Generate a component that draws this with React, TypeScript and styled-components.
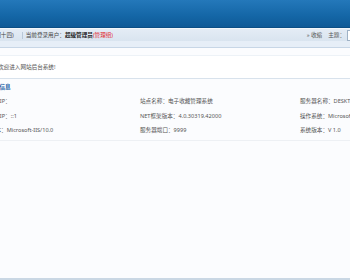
import React from "react";
import styled, { createGlobalStyle } from "styled-components";

const GlobalStyle = createGlobalStyle`
  html, body {
    margin: 0;
    padding: 0;
    background: #fbfcfe;
    overflow: hidden;
  }
  body {
    font-family: "Noto Sans", "Noto Sans CJK SC", sans-serif;
  }
`;

const rows = [
  [
    { label: "服务器IP：", value: "" },
    { label: "站点名称：", value: "电子收藏管理系统" },
    { label: "服务器名称：", value: "DESKTOP-8V1KQ2M" },
  ],
  [
    { label: "客户端IP：", value: "::1" },
    { label: "NET框架版本：", value: "4.0.30319.42000" },
    { label: "操作系统：", value: "Microsoft Windows NT 10.0" },
  ],
  [
    { label: "IIS版本：", value: "Microsoft-IIS/10.0" },
    { label: "服务器端口：", value: "9999" },
    { label: "系统版本：", value: "V 1.0" },
  ],
];

export default function App() {
  return (
    <>
      <GlobalStyle />
      <Page>
        <Header />
        <TopBar>
          <UserInfo>
            <span>(星期十四)</span>
            <Sep />
            <span>
              当前登录用户：<Strong>超级管理员</Strong>
              <Red>(管理组)</Red>
            </span>
          </UserInfo>
          <Tools>
            <span>» 收缩</span>
            <span>主题：</span>
            <ThemeBox />
          </Tools>
        </TopBar>
        <SubBand />
        <Main>
          <Welcome>欢迎进入网站后台系统!</Welcome>
          <Section>
            <Title>系统基本信息</Title>
            <InfoGrid>
              {rows.map((row, i) => (
                <InfoRow key={i}>
                  {row.map((cell) => (
                    <Cell key={cell.label}>
                      {cell.label}
                      {cell.value}
                    </Cell>
                  ))}
                </InfoRow>
              ))}
            </InfoGrid>
          </Section>
        </Main>
        <Footer />
      </Page>
    </>
  );
}

const Page = styled.div`
  width: 350px;
  height: 280px;
  display: flex;
  flex-direction: column;
  overflow: hidden;
`;

const Header = styled.div`
  height: 27px;
  flex-shrink: 0;
  background: linear-gradient(#2478ba, #1466a6 60%, #0f5a97);
  border-bottom: 1px solid #0b4e85;
`;

const TopBar = styled.div`
  height: 12px;
  flex-shrink: 0;
  display: flex;
  align-items: center;
  justify-content: space-between;
  background: linear-gradient(#e4ecf5, #d9e4ef);
  border-top: 1px solid #f2f6fa;
  font-size: 5.6px;
  color: #444;
`;

const UserInfo = styled.div`
  display: flex;
  align-items: center;
  margin-left: -12px;
`;

const Sep = styled.span`
  width: 1px;
  height: 7px;
  margin: 0 3px 0 8px;
  background: #b9c8d8;
`;

const Strong = styled.b`
  color: #222;
`;

const Red = styled.span`
  color: #e0262c;
`;

const Tools = styled.div`
  display: flex;
  align-items: center;
  gap: 6px;
  color: #555;
  margin-right: -9px;
`;

const ThemeBox = styled.span`
  width: 10px;
  height: 9px;
  margin-left: -4px;
  background: #fff;
  border: 1px solid #9fb2c6;
`;

const SubBand = styled.div`
  height: 6px;
  flex-shrink: 0;
  background: #e6eef7;
  border-bottom: 1px solid #c7d6e6;
`;

const Main = styled.div`
  flex: 1;
  padding-top: 7px;
  background: #fbfcfe;
`;

const Welcome = styled.div`
  height: 22px;
  display: flex;
  align-items: center;
  margin-left: -2px;
  background: #fff;
  border-top: 1px solid #edf2f7;
  border-bottom: 1px solid #d8e2ec;
  font-size: 5.6px;
  color: #555;
`;

const Section = styled.div`
  margin-left: -20px;
  padding-top: 4px;
`;

const Title = styled.div`
  height: 9px;
  line-height: 9px;
  margin-left: -3px;
  font-size: 5.6px;
  font-weight: bold;
  color: #1b63a6;
`;

const InfoGrid = styled.div`
  margin-top: 2px;
  border-bottom: 1px solid #edf0f4;
  padding-bottom: 2px;
`;

const InfoRow = styled.div`
  display: grid;
  grid-template-columns: 160px 160px 160px;
  height: 14.5px;
  align-items: center;
`;

const Cell = styled.div`
  font-size: 5.6px;
  color: #555;
  white-space: nowrap;

  &:first-child {
    padding-left: 3px;
  }
`;

const Footer = styled.div`
  height: 2px;
  flex-shrink: 0;
  background: #c9d7e4;
`;
